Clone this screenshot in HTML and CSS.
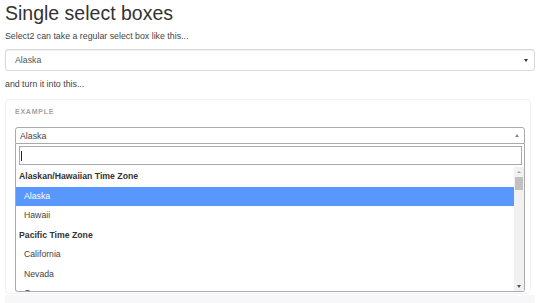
FILE: index.html
```html
<!DOCTYPE html>
<html>
<head>
<meta charset="utf-8">
<link rel="stylesheet" href="styles.css">
</head>
<body>
<h1 class="title">Single select boxes</h1>
<p class="lead first">Select2 can take a regular select box like this...</p>
<div class="native-select"><span>Alaska</span><span class="caret-down"></span></div>
<p class="lead second">and turn it into this...</p>
<div class="example">
  <div class="example-label">EXAMPLE</div>
  <div class="s2-selection"><span>Alaska</span><span class="caret-up"></span></div>
  <div class="s2-dropdown">
    <div class="s2-search"><div class="s2-field"><span class="cursor"></span></div></div>
    <div class="s2-results">
      <ul class="s2-list">
        <li class="group">Alaskan/Hawaiian Time Zone</li>
        <li class="opt hl">Alaska</li>
        <li class="opt">Hawaii</li>
        <li class="group">Pacific Time Zone</li>
        <li class="opt">California</li>
        <li class="opt">Nevada</li>
        <li class="opt">Oregon</li>
      </ul>
      <div class="scrollbar">
        <span class="sb-up"></span>
        <span class="sb-thumb"></span>
        <span class="sb-fill"></span>
        <span class="sb-down"></span>
      </div>
    </div>
  </div>
</div>
<div class="code"></div>
</body>
</html>
```
FILE: styles.css
```css
html, body {
  margin: 0;
  background: #fff;
}
body {
  padding: 2px 5px 0;
  font-family: "Liberation Sans", Arial, sans-serif;
  color: #333;
  overflow: hidden;
  height: 301px;
}
.title {
  margin: 0;
  font-size: 19.5px;
  line-height: 22px;
  font-weight: 400;
  color: #333;
}
.lead {
  margin: 0;
  font-size: 8.8px;
  line-height: 13px;
  color: #444;
}
.lead.first { margin-top: 6px; }
.lead.second { margin-top: 7px; }
.native-select {
  margin-top: 6px;
  height: 22px;
  box-sizing: border-box;
  border: 1px solid #d8d8d8;
  border-radius: 3px;
  box-shadow: inset 0 1px 1px rgba(0,0,0,0.06);
  display: flex;
  align-items: center;
  justify-content: space-between;
  padding: 0 6px 0 9px;
  font-size: 8.8px;
  color: #555;
}
.caret-down {
  width: 0;
  height: 0;
  border-left: 2.5px solid transparent;
  border-right: 2.5px solid transparent;
  border-top: 3px solid #333;
}
.example {
  margin: 8px 4px 0 0;
  border: 1px solid #f1f1f1;
  border-radius: 4px;
  padding: 7px 5px 1px 9px;
}
.example-label {
  font-size: 7px;
  line-height: 10px;
  font-weight: 700;
  letter-spacing: 0.75px;
  color: #a3a3a3;
}
.s2-selection {
  margin-top: 10px;
  height: 17px;
  box-sizing: border-box;
  border: 1px solid #aaa;
  border-radius: 3px 3px 0 0;
  display: flex;
  align-items: center;
  justify-content: space-between;
  padding: 0 5px 0 4px;
  font-size: 8.8px;
  color: #444;
}
.caret-up {
  width: 0;
  height: 0;
  border-left: 2.5px solid transparent;
  border-right: 2.5px solid transparent;
  border-bottom: 3px solid #888;
}
.s2-dropdown {
  border: 1px solid #aaa;
  border-top: none;
  border-radius: 0 0 3px 3px;
  height: 148px;
  box-sizing: border-box;
  display: flex;
  flex-direction: column;
}
.s2-search {
  padding: 2px 2px 2px 3px;
}
.s2-field {
  height: 19px;
  box-sizing: border-box;
  border: 1px solid #aaa;
  display: flex;
  align-items: center;
  padding-left: 1px;
}
.cursor {
  width: 1px;
  height: 10px;
  background: #222;
}
.s2-results {
  flex: 1;
  display: flex;
  overflow: hidden;
}
.s2-list {
  flex: 1;
  margin: 0;
  padding: 0;
  list-style: none;
  overflow: hidden;
  font-size: 8.7px;
  color: #444;
}
.s2-list li {
  height: 19.5px;
  line-height: 19.5px;
  white-space: nowrap;
}
.group {
  font-weight: 700;
  padding-left: 3px;
  color: #333;
}
.opt {
  padding-left: 8px;
}
.opt.hl {
  background: #5897fb;
  color: #fff;
}
.scrollbar {
  width: 10px;
  background: #f1f1f1;
  display: flex;
  flex-direction: column;
  align-items: center;
  padding: 4px 0 3px;
  box-sizing: border-box;
}
.sb-up {
  width: 0;
  height: 0;
  border-left: 2px solid transparent;
  border-right: 2px solid transparent;
  border-bottom: 2.5px solid #a3a3a3;
}
.sb-thumb {
  margin-top: 4px;
  width: 8px;
  height: 13px;
  background: #c1c1c1;
}
.sb-fill { flex: 1; }
.sb-down {
  width: 0;
  height: 0;
  border-left: 2.5px solid transparent;
  border-right: 2.5px solid transparent;
  border-top: 3px solid #505050;
}
.code {
  margin: 1px 0 0 0;
  height: 20px;
  background: #f7f7f9;
}
```
